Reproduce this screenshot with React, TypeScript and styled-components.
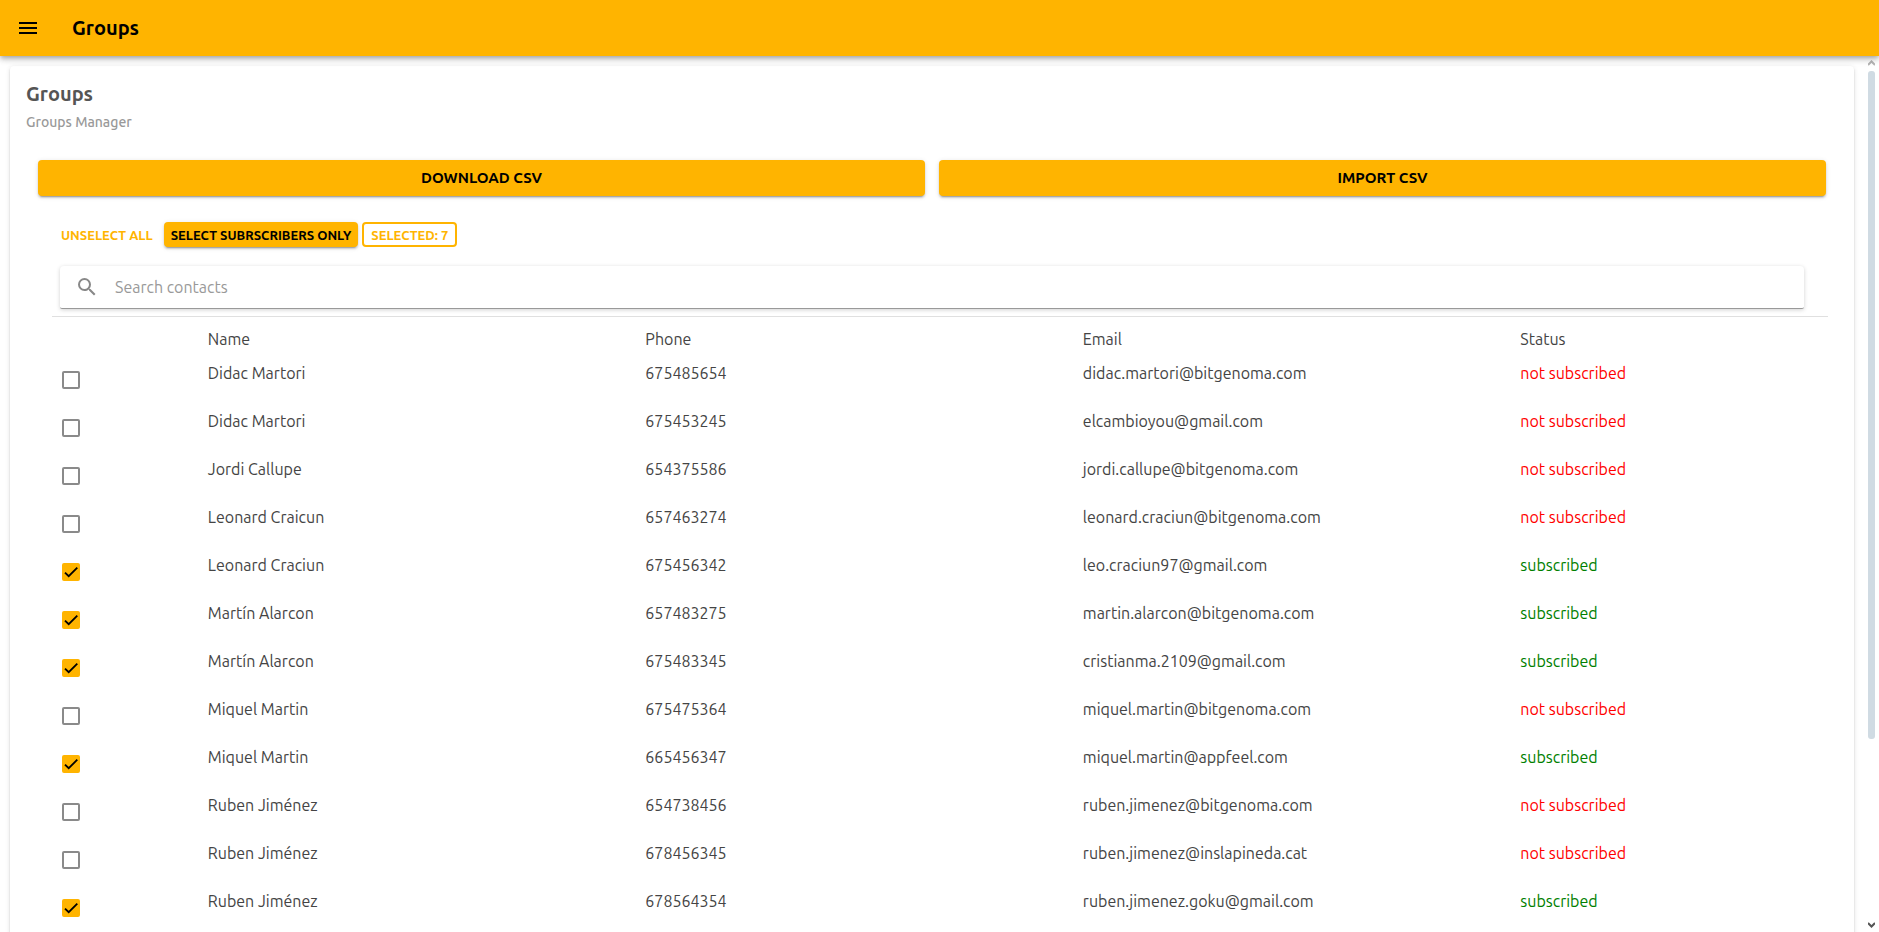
import { useState } from "react";
import styled, { createGlobalStyle, css } from "styled-components";
import { MdMenu, MdSearch } from "react-icons/md";

const amber = "#ffb400";
const raised = css`
  box-shadow:
    0 3px 1px -2px rgba(0, 0, 0, 0.2),
    0 2px 2px 0 rgba(0, 0, 0, 0.14),
    0 1px 5px 0 rgba(0, 0, 0, 0.12);
`;

const GlobalStyle = createGlobalStyle`
  *, *::before, *::after { box-sizing: border-box; }
  body {
    margin: 0;
    background: #fff;
    color: #444;
    font-family: Ubuntu, "Noto Sans", "Open Sans", sans-serif;
    font-size: 16px;
    line-height: 24px;
  }
  button, input { font: inherit; }
`;

const Shell = styled.div`
  display: flex;
  flex-direction: column;
  height: 100vh;
  overflow: hidden;
`;

const AppBar = styled.header`
  display: flex;
  align-items: center;
  gap: 32px;
  flex: none;
  height: 56px;
  padding: 0 16px;
  background: ${amber};
  color: #000;
  z-index: 1;
  box-shadow:
    0 2px 4px -1px rgba(0, 0, 0, 0.2),
    0 4px 5px 0 rgba(0, 0, 0, 0.14),
    0 1px 10px 0 rgba(0, 0, 0, 0.12);
`;

const MenuButton = styled.button`
  display: flex;
  padding: 0;
  border: 0;
  background: none;
  color: inherit;
  cursor: pointer;
`;

const AppTitle = styled.h1`
  margin: 0;
  font-size: 20px;
  font-weight: 600;
`;

const Body = styled.div`
  display: flex;
  flex: 1;
  min-height: 0;
`;

const Content = styled.main`
  flex: 1;
  min-width: 0;
  padding: 10px;
  overflow: hidden;
`;

const Card = styled.section`
  padding: 16px;
  border-radius: 4px;
  background: #fff;
  ${raised}
`;

const CardTitle = styled.h2`
  margin: 0;
  color: #555;
  font-size: 20px;
  font-weight: 600;
`;

const CardSubtitle = styled.p`
  margin: 4px 0 0;
  color: #999;
  font-size: 14px;
  font-weight: 500;
`;

const FileActions = styled.div`
  display: grid;
  grid-template-columns: 1fr 1fr;
  gap: 14px;
  padding: 26px 12px;
`;

const Button = styled.button<{ $kind?: "raised" | "text" | "outlined"; $small?: boolean }>`
  height: ${(p) => (p.$small ? 25 : 36)}px;
  padding: 0 ${(p) => (p.$small ? 7 : 16)}px;
  border: 0;
  border-radius: 4px;
  font-size: ${(p) => (p.$small ? 13 : 15)}px;
  line-height: 20px;
  font-weight: 600;
  text-transform: uppercase;
  white-space: nowrap;
  cursor: pointer;
  ${({ $kind = "raised" }) =>
    $kind === "raised"
      ? css`
          background: ${amber};
          color: #000;
          ${raised}
        `
      : css`
          background: transparent;
          color: ${amber};
        `}
  ${({ $kind }) => $kind === "outlined" && css`
    border: 2px solid ${amber};
  `}
`;

const Contacts = styled.div`
  padding: 0 10px 0 26px;
`;

const Selection = styled.div`
  display: flex;
  gap: 4px;
  padding-left: 2px;
`;

const SearchBar = styled.label`
  display: flex;
  align-items: center;
  gap: 16px;
  height: 43px;
  margin: 19px 24px 7px 8px;
  padding: 0 15px;
  border-bottom: 1px solid #999;
  border-radius: 4px 4px 2px 2px;
  color: #888;
  box-shadow: 0 1px 4px 0 rgba(0, 0, 0, 0.18);
`;

const SearchInput = styled.input`
  flex: 1;
  min-width: 0;
  height: 40px;
  padding: 0;
  border: 0;
  outline: 0;
  background: transparent;
  color: #444;
  &::placeholder { color: #999; opacity: 1; }
`;

const Divider = styled.hr`
  margin: 0;
  border: 0;
  border-top: 1px solid #e0e0e0;
`;

const TableArea = styled.div`
  padding: 10px 16px 0 10px;
`;

const Table = styled.table`
  width: 100%;
  table-layout: fixed;
  border-collapse: collapse;
  td, th {
    padding: 0;
    font-weight: 400;
    text-align: left;
    vertical-align: top;
  }
  thead tr { height: 34px; }
  tbody tr { height: 48px; }
`;

const Col = styled.col<{ $share: number }>`
  width: calc(100% * ${(p) => p.$share} / 12);
`;

const Status = styled.td<{ $on: boolean }>`
  color: ${(p) => (p.$on ? "green" : "red")};
`;

const Tick = styled.span`
  display: grid;
  width: 18px;
  height: 18px;
  margin-top: 10px;
  & > * { grid-area: 1 / 1; }
  svg { pointer-events: none; }
`;

const TickInput = styled.input`
  appearance: none;
  width: 18px;
  height: 18px;
  margin: 0;
  border: 2px solid #8a8a8a;
  border-radius: 2px;
  cursor: pointer;
  &:checked { border-color: ${amber}; background: ${amber}; }
  &:not(:checked) + svg { visibility: hidden; }
`;

const ScrollRail = styled.div`
  display: flex;
  flex-direction: column;
  align-items: center;
  flex: none;
  width: 15px;
  padding: 4px 0;
`;

const ScrollTrack = styled.div`
  flex: 1;
  width: 7px;
  margin: 5px 0;
`;

const ScrollThumb = styled.div`
  height: 79%;
  border-radius: 3px;
  background: #d0dbe3;
`;

type Contact = [name: string, phone: string, email: string, subscribed: boolean];

const contacts: Contact[] = [
  ["Didac Martori", "675485654", "didac.martori@bitgenoma.com", false],
  ["Didac Martori", "675453245", "elcambioyou@gmail.com", false],
  ["Jordi Callupe", "654375586", "jordi.callupe@bitgenoma.com", false],
  ["Leonard Craicun", "657463274", "leonard.craciun@bitgenoma.com", false],
  ["Leonard Craciun", "675456342", "leo.craciun97@gmail.com", true],
  ["Martín Alarcon", "657483275", "martin.alarcon@bitgenoma.com", true],
  ["Martín Alarcon", "675483345", "cristianma.2109@gmail.com", true],
  ["Miquel Martin", "675475364", "miquel.martin@bitgenoma.com", false],
  ["Miquel Martin", "665456347", "miquel.martin@appfeel.com", true],
  ["Ruben Jiménez", "654738456", "ruben.jimenez@bitgenoma.com", false],
  ["Ruben Jiménez", "678456345", "ruben.jimenez@inslapineda.cat", false],
  ["Ruben Jiménez", "678564354", "ruben.jimenez.goku@gmail.com", true],
];

function Chevron({ down, color }: { down?: boolean; color: string }) {
  return (
    <svg width="7" height="6" viewBox="0 0 7 6" fill="none" stroke={color} strokeWidth="2" aria-hidden="true">
      <path d={down ? "M0 1l3.5 3.5L7 1" : "M0 5l3.5-3.5L7 5"} />
    </svg>
  );
}

export default function App() {
  const [checked, setChecked] = useState(() => contacts.map((c) => c[3]));
  const toggle = (index: number) =>
    setChecked((now) => now.map((value, i) => (i === index ? !value : value)));

  return (
    <>
      <GlobalStyle />
      <Shell>
        <AppBar>
          <MenuButton type="button" aria-label="Menu">
            <MdMenu size={24} />
          </MenuButton>
          <AppTitle>Groups</AppTitle>
        </AppBar>
        <Body>
          <Content>
            <Card>
              <CardTitle>Groups</CardTitle>
              <CardSubtitle>Groups Manager</CardSubtitle>
              <FileActions>
                <Button type="button">Download CSV</Button>
                <Button type="button">Import CSV</Button>
              </FileActions>
              <Contacts>
                <Selection>
                  <Button type="button" $kind="text" $small onClick={() => setChecked(contacts.map(() => false))}>
                    Unselect all
                  </Button>
                  <Button type="button" $small onClick={() => setChecked(contacts.map((c) => c[3]))}>
                    Select subrscribers only
                  </Button>
                  <Button type="button" $kind="outlined" $small>
                    Selected: 7
                  </Button>
                </Selection>
                <SearchBar>
                  <MdSearch size={24} aria-hidden="true" />
                  <SearchInput type="text" placeholder="Search contacts" aria-label="Search contacts" />
                </SearchBar>
                <Divider />
                <TableArea>
                  <Table>
                    <colgroup>
                      <Col $share={1} />
                      <Col $share={3} />
                      <Col $share={3} />
                      <Col $share={3} />
                      <Col $share={2} />
                    </colgroup>
                    <thead>
                      <tr>
                        <td />
                        <th scope="col">Name</th>
                        <th scope="col">Phone</th>
                        <th scope="col">Email</th>
                        <th scope="col">Status</th>
                      </tr>
                    </thead>
                    <tbody>
                      {contacts.map(([name, phone, email, subscribed], i) => (
                        <tr key={phone}>
                          <td>
                            <Tick>
                              <TickInput
                                type="checkbox"
                                aria-label={name}
                                checked={checked[i]}
                                onChange={() => toggle(i)}
                              />
                              <svg width="18" height="18" viewBox="0 0 18 18" fill="none" stroke="#000" strokeWidth="1.82" aria-hidden="true">
                                <path d="M3 9.53l3.72 3.72 8.57-8.57" />
                              </svg>
                            </Tick>
                          </td>
                          <td>{name}</td>
                          <td>{phone}</td>
                          <td>{email}</td>
                          <Status $on={subscribed}>{subscribed ? "subscribed" : "not subscribed"}</Status>
                        </tr>
                      ))}
                    </tbody>
                  </Table>
                </TableArea>
              </Contacts>
            </Card>
          </Content>
          <ScrollRail aria-hidden="true">
            <Chevron color="#b5b5b5" />
            <ScrollTrack>
              <ScrollThumb />
            </ScrollTrack>
            <Chevron down color="#555" />
          </ScrollRail>
        </Body>
      </Shell>
    </>
  );
}
